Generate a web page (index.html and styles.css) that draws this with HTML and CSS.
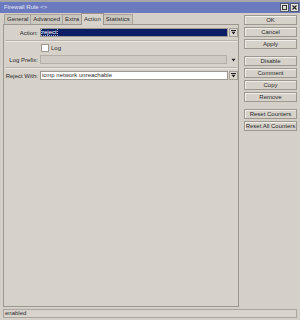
FILE: index.html
```html
<!doctype html>
<html>
<head>
<meta charset="utf-8">
<title>Firewall Rule</title>
<link rel="stylesheet" href="styles.css">
</head>
<body>
<div class="window">
	<div class="titlebar">
		<span class="title">Firewall Rule &lt;&gt;</span>
		<div class="winbtns">
			<span class="wbtn"><svg width="5" height="5" viewBox="0 0 5 5"><rect x="0.5" y="0.5" width="4" height="4" fill="none" stroke="#333" stroke-width="1"/></svg></span>
			<span class="wbtn"><svg width="5" height="5" viewBox="0 0 5 5"><path d="M0.5 0.5L4.5 4.5M4.5 0.5L0.5 4.5" stroke="#222" stroke-width="1.2"/></svg></span>
		</div>
	</div>

	<div class="main">
		<div class="left">
			<div class="tabs">
				<span class="tab">General</span>
				<span class="tab">Advanced</span>
				<span class="tab">Extra</span>
				<span class="tab active">Action</span>
				<span class="tab">Statistics</span>
			</div>
			<div class="panel">
				<div class="row">
					<label class="lbl">Action:</label>
					<div class="field selected"><span class="sel-text">reject</span></div>
					<span class="dd"><svg width="5" height="5" viewBox="0 0 5 5"><path d="M0 0.5H5" stroke="#222" stroke-width="1"/><path d="M0.5 1.8H4.5L2.5 4.6Z" fill="#222"/></svg></span>
				</div>
				<div class="sep"></div>
				<div class="row check-row">
					<span class="lbl"></span>
					<span class="checkbox"></span>
					<span class="check-text">Log</span>
				</div>
				<div class="row">
					<label class="lbl">Log Prefix:</label>
					<div class="field disabled"></div>
					<span class="dd plain"><svg width="5" height="4" viewBox="0 0 5 4"><path d="M0.5 0.8H4.5L2.5 3.6Z" fill="#222"/></svg></span>
				</div>
				<div class="sep"></div>
				<div class="row">
					<label class="lbl">Reject With:</label>
					<div class="field">icmp network unreachable</div>
					<span class="dd"><svg width="5" height="5" viewBox="0 0 5 5"><path d="M0 0.5H5" stroke="#222" stroke-width="1"/><path d="M0.5 1.8H4.5L2.5 4.6Z" fill="#222"/></svg></span>
				</div>
			</div>
		</div>

		<div class="buttons">
			<div class="group">
				<button class="btn">OK</button>
				<button class="btn">Cancel</button>
				<button class="btn">Apply</button>
			</div>
			<div class="group">
				<button class="btn">Disable</button>
				<button class="btn">Comment</button>
				<button class="btn">Copy</button>
				<button class="btn">Remove</button>
			</div>
			<div class="group">
				<button class="btn">Reset Counters</button>
				<button class="btn">Reset All Counters</button>
			</div>
		</div>
	</div>

	<div class="status">enabled</div>
</div>
</body>
</html>
```

FILE: styles.css
```css
body{
	margin: 0;
	background-color: #d4d0c8;
	font-family: "Liberation Sans", Arial, sans-serif;
	font-size: 6px;
	color: #2b2b2b;
}
.window{
	width: 300px;
	height: 320px;
	overflow: hidden;
}
.titlebar{
	height: 11px;
	border-top: 2px solid #a6a6a6;
	background-color: #6b79bf;
	display: flex;
	align-items: center;
	justify-content: space-between;
	padding: 0 1px 0 4px;
}
.title{
	color: #e8e8f2;
	line-height: 11px;
}
.winbtns{
	display: flex;
	gap: 1px;
}
.wbtn{
	width: 7px;
	height: 7px;
	background-color: #e4e2de;
	border: 1px solid #55586a;
	display: flex;
	align-items: center;
	justify-content: center;
}
.main{
	display: flex;
	height: 294px;
	padding-left: 3px;
}
.left{
	width: 236px;
	display: flex;
	flex-direction: column;
}
.tabs{
	height: 11px;
	display: flex;
	align-items: flex-end;
	padding-left: 1px;
}
.tab{
	height: 9px;
	line-height: 9px;
	padding: 0 2px;
	border: 1px solid #a8a49c;
	border-bottom: none;
	background-color: #cbc7bf;
	margin-right: -1px;
}
.tab.active{
	height: 11px;
	line-height: 10px;
	background-color: #d8d4cc;
	border-color: #9a968e;
	position: relative;
	margin-bottom: -1px;
	z-index: 1;
}
.panel{
	flex: 1;
	border: 1px solid #9c9890;
	background-color: #d6d2ca;
	padding-top: 3px;
}
.row{
	display: flex;
	align-items: center;
	height: 9px;
}
.lbl{
	width: 34px;
	margin-right: 2px;
	text-align: right;
	flex: none;
}
.field{
	width: 185px;
	height: 7px;
	line-height: 7px;
	border: 1px solid #9c9890;
	background-color: #ffffff;
	padding-left: 1px;
	white-space: nowrap;
	overflow: hidden;
}
.field.selected{
	background-color: #0c1f66;
	color: #ffffff;
}
.sel-text{
	outline: 1px dotted #9aa6d8;
}
.field.disabled{
	background-color: #cfcbc3;
	border-color: #b4b0a8;
}
.dd{
	width: 7px;
	height: 7px;
	margin-left: 1px;
	border: 1px solid #a4a098;
	background-color: #dcd8d0;
	display: flex;
	align-items: center;
	justify-content: center;
}
.dd.plain{
	border-color: transparent;
	background-color: transparent;
	margin-left: 2px;
}
.sep{
	height: 1px;
	background-color: #b6b2aa;
	border-bottom: 1px solid #ece9e4;
	margin: 3px 1px 0 1px;
}
.check-row{
	height: 8px;
}
.checkbox{
	width: 6px;
	height: 6px;
	border: 1px solid #9c9890;
	background-color: #ffffff;
	margin-left: 1px;
	margin-right: 2px;
}
.row + .row{
	margin-top: 3px;
}
.sep + .row{
	margin-top: 2px;
}
.buttons{
	width: 53px;
	margin-left: 5px;
	padding-top: 2px;
}
.group{
	display: flex;
	flex-direction: column;
	gap: 2px;
	margin-bottom: 7px;
}
.btn{
	height: 10px;
	padding: 0;
	font-family: inherit;
	font-size: 6px;
	line-height: 8px;
	color: #2b2b2b;
	background-color: #d6d2ca;
	border: 1px solid #9d9991;
	box-shadow: inset 1px 1px 0 #f0eee9;
	white-space: nowrap;
}
.status{
	margin: 2px 3px 0 3px;
	height: 7px;
	line-height: 7px;
	border: 1px solid #aaa69e;
	background-color: #d8d4cc;
	padding-left: 1px;
}
```
